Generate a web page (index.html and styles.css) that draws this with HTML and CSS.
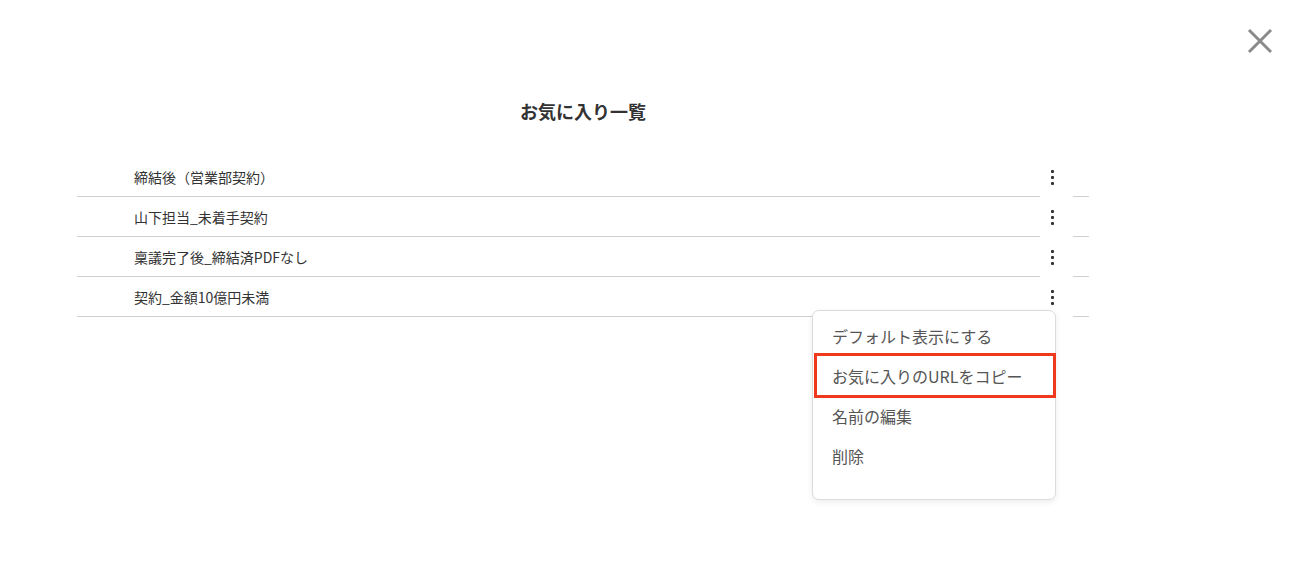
FILE: index.html
```html
<!DOCTYPE html>
<html lang="ja">
<head>
<meta charset="utf-8">
<link rel="stylesheet" href="styles.css">
</head>
<body>
<div class="page">
  <button class="close" aria-label="閉じる">
    <svg width="26" height="26" viewBox="0 0 26 26"><path d="M2 2L24 24M24 2L2 24" stroke="#8a8a8a" stroke-width="3" stroke-linecap="butt"/></svg>
  </button>
  <div class="panel">
    <h1 class="title">お気に入り一覧</h1>
    <ul class="list">
      <li class="row"><span class="name">締結後（営業部契約）</span><span class="kebab"><i></i><i></i><i></i></span><span class="tail"></span></li>
      <li class="row"><span class="name">山下担当_未着手契約</span><span class="kebab"><i></i><i></i><i></i></span><span class="tail"></span></li>
      <li class="row"><span class="name">稟議完了後_締結済PDFなし</span><span class="kebab"><i></i><i></i><i></i></span><span class="tail"></span></li>
      <li class="row"><span class="name">契約_金額10億円未満</span><span class="kebab"><i></i><i></i><i></i></span><span class="tail"></span></li>
    </ul>
  </div>
  <div class="menu">
    <div class="item">デフォルト表示にする</div>
    <div class="item highlighted">お気に入りのURLをコピー</div>
    <div class="item">名前の編集</div>
    <div class="item">削除</div>
  </div>
</div>
</body>
</html>
```

FILE: styles.css
```css
* { box-sizing: border-box; }
html, body { margin: 0; padding: 0; background: #fff; }
body {
  font-family: "Noto Sans CJK JP", "Noto Sans", sans-serif;
  color: #333;
  width: 1296px;
  height: 574px;
  overflow: hidden;
}
.page { position: relative; width: 1296px; height: 574px; padding-top: 96px; }
.close {
  position: absolute;
  left: 1247px;
  top: 28px;
  width: 26px;
  height: 26px;
  padding: 0;
  border: 0;
  background: none;
}
.close svg { display: block; }
.panel {
  margin-left: 77px;
  width: 1012px;
}
.title {
  margin: 0;
  text-align: center;
  font-size: 18px;
  font-weight: 700;
  line-height: 30px;
  color: #333;
}
.list {
  list-style: none;
  margin: 31px 0 0 0;
  padding: 0;
}
.row {
  display: flex;
  height: 40px;
  align-items: stretch;
}
.name {
  flex: 1;
  border-bottom: 1px solid #cfcfcf;
  padding-left: 57px;
  font-size: 14px;
  line-height: 40px;
  color: #333;
}
.kebab {
  width: 33px;
  display: flex;
  flex-direction: column;
  align-items: center;
  justify-content: center;
  gap: 3px;
  padding-right: 9px;
  padding-top: 1px;
}
.kebab i {
  display: block;
  width: 3px;
  height: 3px;
  background: #333;
  border-radius: 1px;
}
.tail {
  width: 16px;
  border-bottom: 1px solid #cfcfcf;
}
.menu {
  position: absolute;
  left: 812px;
  top: 310px;
  width: 244px;
  height: 190px;
  background: #fff;
  border: 1px solid #dcdcdc;
  border-radius: 7px;
  box-shadow: 0 2px 6px rgba(0,0,0,0.08);
  padding-top: 5px;
}
.item {
  position: relative;
  height: 40px;
  line-height: 40px;
  padding-left: 19px;
  font-size: 16px;
  color: #555;
}
.highlighted::after {
  content: "";
  position: absolute;
  left: 1px;
  right: -1px;
  top: -3px;
  bottom: -2px;
  border: 3px solid #f0391c;
}
```
